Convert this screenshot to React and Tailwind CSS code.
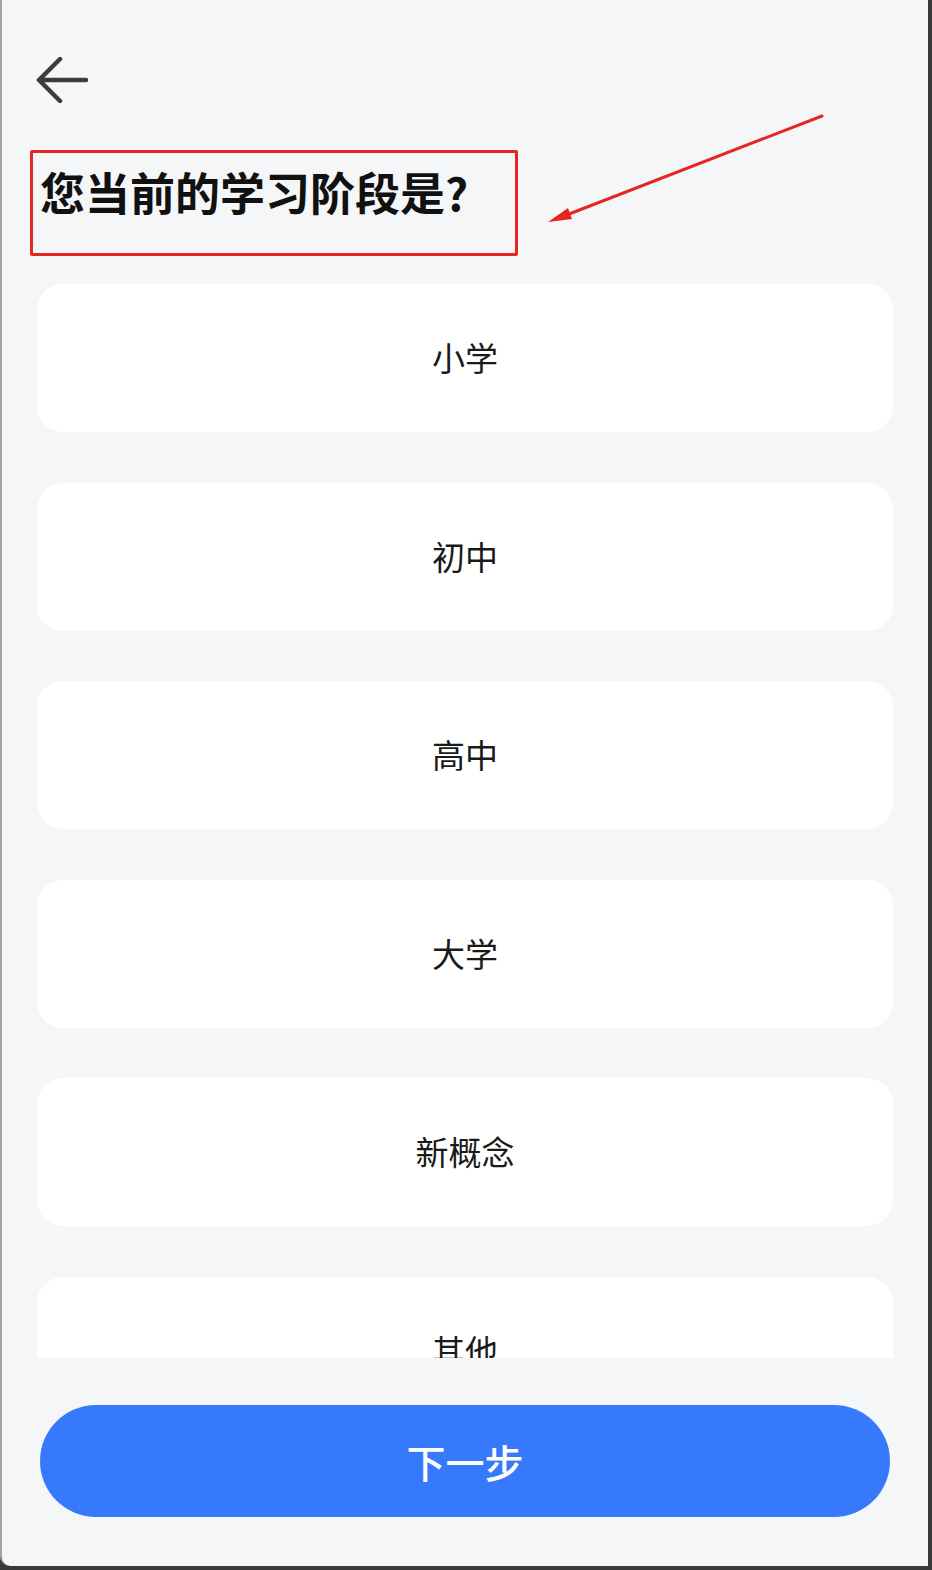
import React from "react";

const options = ["小学", "初中", "高中", "大学", "新概念", "其他"];

function BackArrow() {
  return (
    <svg width="52" height="46" viewBox="0 0 52 46" fill="none">
      <path
        d="M50 23H3M24 2L3 23L24 44"
        stroke="#3d3d3d"
        strokeWidth="4.5"
        strokeLinecap="round"
        strokeLinejoin="round"
      />
    </svg>
  );
}

export default function App() {
  return (
    <div
      className="w-[932px] h-[1570px] bg-[#3a3a3a] overflow-hidden"
      style={{ fontFamily: '"Noto Sans CJK SC", "Noto Sans", sans-serif' }}
    >
      <div className="relative w-[928px] h-[1566px] bg-[#f5f6f8] border-l-2 border-[#a3a3a3] rounded-bl-[10px] flex flex-col">
        {/* header */}
        <div className="pt-[57px] pl-[34px] h-[102px]">
          <BackArrow />
        </div>

        {/* title */}
        <div className="h-[182px] pl-[38px] pt-[60px]">
          <h1 className="text-[45px] leading-[60px] font-bold text-[#111]">
            您当前的学习阶段是?
          </h1>
        </div>

        {/* annotation */}
        <div className="absolute left-[28px] top-[150px] w-[488px] h-[106px] border-[3px] border-[#e5251f] rounded-[2px]" />
        <svg
          className="absolute left-0 top-0 pointer-events-none"
          width="928"
          height="300"
        >
          <line x1="820" y1="116" x2="562" y2="216" stroke="#e5251f" strokeWidth="3" strokeLinecap="round" />
          <polygon points="546,222 566,208 570,219" fill="#e5251f" />
        </svg>

        {/* options */}
        <div className="h-[1074px] overflow-hidden px-[35px]">
          <div className="flex flex-col gap-[50.5px]">
            {options.map((o) => (
              <button
                key={o}
                className="h-[148px] shrink-0 bg-white rounded-[26px] flex items-center justify-center text-[33px] text-[#1a1a1a]"
              >
                {o}
              </button>
            ))}
          </div>
        </div>

        {/* next */}
        <div className="pt-[47px] px-[38px]">
          <button className="w-full h-[112px] rounded-full bg-[#3679fd] text-white text-[39px] font-medium">
            下一步
          </button>
        </div>
      </div>
    </div>
  );
}
